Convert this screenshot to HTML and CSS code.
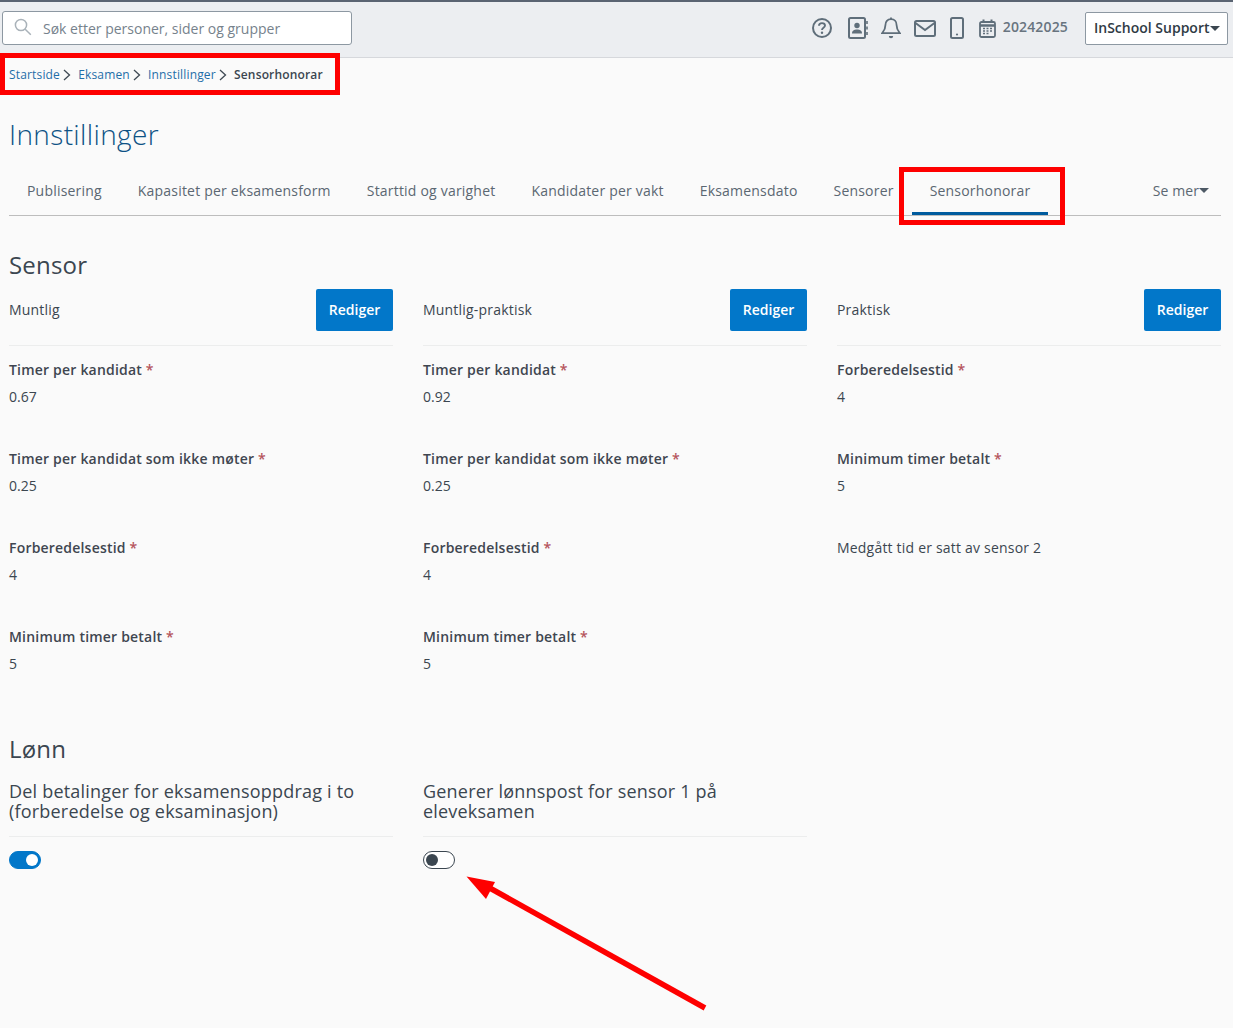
FILE: index.html
```html
<!DOCTYPE html>
<html lang="no">
<head>
<meta charset="utf-8">
<title>Sensorhonorar</title>
<link rel="stylesheet" href="styles.css">
</head>
<body>
<header class="topbar">
  <div class="search">
    <svg class="search-icon" width="18" height="18" viewBox="0 0 18 18" fill="none" stroke="#a9b2b9" stroke-width="1.5"><circle cx="7" cy="7" r="5.6"/><path d="M11.2 11.2l5.6 5.6"/></svg>
    <span class="search-text">Søk etter personer, sider og grupper</span>
  </div>
  <div class="tools">
    <svg class="ic ic-wide" width="22" height="22" viewBox="0 0 22 22" fill="none" stroke="#5f6e7a" stroke-width="2"><circle cx="11" cy="11" r="9"/><path d="M8 8.800c0-1.800 1.400-2.700 3-2.700s3 .9 3 2.500c0 2.200-3 2.200-3 4.300" stroke-width="1.900"/><circle cx="11" cy="15.700" r="1.200" fill="#5f6e7a" stroke="none"/></svg>
    <svg class="ic ic-tight" width="20" height="22" viewBox="0 0 20 22" fill="none" stroke="#5f6e7a" stroke-width="2"><rect x="1" y="1" width="16" height="20" rx="1.500"/><circle cx="9" cy="8.500" r="2.700" fill="#5f6e7a" stroke="none"/><path d="M4 16.500c0-3 2-4 5-4s5 1 5 4z" fill="#5f6e7a" stroke="none"/><path d="M19 4v3M19 9.500v3M19 15v3" stroke-width="1.600"/></svg>
    <svg class="ic ic-tight" width="20" height="22" viewBox="0 0 20 22" fill="none" stroke="#5f6e7a" stroke-width="1.800"><path d="M10 2.200c-3.600 0-5.600 2.600-5.600 6 0 4.300-1.400 5.500-3.400 8h18c-2-2.500-3.400-3.700-3.400-8 0-3.400-2-6-5.600-6z"/><path d="M10 .5v1.700"/><path d="M7.800 19a2.200 2.200 0 0 0 4.400 0z" fill="#5f6e7a" stroke="none"/></svg>
    <svg class="ic" width="22" height="17" viewBox="0 0 22 17" fill="none" stroke="#5f6e7a" stroke-width="2"><rect x="1" y="1" width="20" height="15" rx="1.500"/><path d="M1.500 3l9.500 7L20.500 3"/></svg>
    <svg class="ic ic-wide" width="14" height="22" viewBox="0 0 14 22" fill="none" stroke="#5f6e7a" stroke-width="2"><rect x="1" y="1" width="12" height="20" rx="1.500"/><circle cx="7" cy="17.500" r="1.100" fill="#5f6e7a" stroke="none"/></svg>
    <div class="term">
      <svg width="17" height="19" viewBox="0 0 17 19" fill="none" stroke="#5f6e7a" stroke-width="1.800"><rect x="1" y="3" width="15" height="15" rx="1.500"/><path d="M1 6.500h15" stroke-width="2.500"/><path d="M4.500 0.500v3.500M12.500 0.500v3.500" stroke-width="2"/><path d="M4 9.500h2M7.500 9.500h2M11 9.500h2M4 12h2M7.500 12h2M11 12h2M4 14.500h2M7.500 14.500h2" stroke-width="1.500"/></svg>
      <span>20242025</span>
    </div>
    <div class="user">InSchool Support<span class="caret"></span></div>
  </div>
</header>

<nav class="crumbs">
  <a>Startside</a>
  <svg class="chev" width="8" height="12" viewBox="0 0 8 12" fill="none" stroke="#3f4a54" stroke-width="1.300"><path d="M1 1l5.500 5L1 11"/></svg>
  <a>Eksamen</a>
  <svg class="chev" width="8" height="12" viewBox="0 0 8 12" fill="none" stroke="#3f4a54" stroke-width="1.300"><path d="M1 1l5.500 5L1 11"/></svg>
  <a>Innstillinger</a>
  <svg class="chev" width="8" height="12" viewBox="0 0 8 12" fill="none" stroke="#3f4a54" stroke-width="1.300"><path d="M1 1l5.500 5L1 11"/></svg>
  <strong>Sensorhonorar</strong>
</nav>

<main class="page">
  <h1>Innstillinger</h1>
  <div class="tabs">
    <span class="tab">Publisering</span>
    <span class="tab">Kapasitet per eksamensform</span>
    <span class="tab">Starttid og varighet</span>
    <span class="tab">Kandidater per vakt</span>
    <span class="tab">Eksamensdato</span>
    <span class="tab">Sensorer</span>
    <span class="tab active">Sensorhonorar</span>
    <span class="tab more">Se mer<span class="caret"></span></span>
  </div>

  <h2 class="sensor-title">Sensor</h2>
  <div class="cols">
    <section>
      <div class="col-head"><span>Muntlig</span><button class="btn">Rediger</button></div>
      <div class="field"><label>Timer per kandidat <i>*</i></label><p>0.67</p></div>
      <div class="field"><label>Timer per kandidat som ikke møter <i>*</i></label><p>0.25</p></div>
      <div class="field"><label>Forberedelsestid <i>*</i></label><p>4</p></div>
      <div class="field"><label>Minimum timer betalt <i>*</i></label><p>5</p></div>
    </section>
    <section>
      <div class="col-head"><span>Muntlig-praktisk</span><button class="btn">Rediger</button></div>
      <div class="field"><label>Timer per kandidat <i>*</i></label><p>0.92</p></div>
      <div class="field"><label>Timer per kandidat som ikke møter <i>*</i></label><p>0.25</p></div>
      <div class="field"><label>Forberedelsestid <i>*</i></label><p>4</p></div>
      <div class="field"><label>Minimum timer betalt <i>*</i></label><p>5</p></div>
    </section>
    <section>
      <div class="col-head"><span>Praktisk</span><button class="btn">Rediger</button></div>
      <div class="field"><label>Forberedelsestid <i>*</i></label><p>4</p></div>
      <div class="field"><label>Minimum timer betalt <i>*</i></label><p>5</p></div>
      <div class="field"><span class="note">Medgått tid er satt av sensor 2</span></div>
    </section>
  </div>

  <h2 class="pay-title">Lønn</h2>
  <div class="cols">
    <section>
      <h3>Del betalinger for eksamensoppdrag i to (forberedelse og eksaminasjon)</h3>
      <div class="switch on"></div>
    </section>
    <section>
      <h3>Generer lønnspost for sensor 1 på eleveksamen</h3>
      <div class="switch"></div>
    </section>
  </div>
</main>

<div class="mark mark-crumbs"></div>
<div class="mark mark-tab"></div>
<svg class="arrow" width="250" height="145" viewBox="0 0 250 145">
  <path d="M243 133L26 12" stroke="#fe0000" stroke-width="5.500" fill="none"/>
  <polygon points="4.500,1.500 33,7 24,24" fill="#fe0000"/>
</svg>
</body>
</html>
```
FILE: styles.css
```css
* { box-sizing: border-box; }
html, body { margin: 0; padding: 0; }
body {
  height: 1028px;
  overflow: hidden;
  background: #fafafa;
  color: #3b4650;
  font-family: "Open Sans", sans-serif;
  font-size: 14px;
  line-height: 20px;
  position: relative;
}
.topbar {
  height: 58px;
  background: #eceef1;
  border-top: 2px solid #5a6472;
  border-bottom: 1px solid #d6d8dc;
  display: flex;
  align-items: center;
  justify-content: space-between;
  padding: 0 5px 3px 2px;
}
.search {
  width: 350px;
  height: 34px;
  background: #fff;
  border: 1px solid #8d98a2;
  border-radius: 3px;
  display: flex;
  align-items: center;
  gap: 11px;
  padding-left: 11px;
  color: #76828c;
}
.search-icon { margin-top: -2px; }
.search-text { margin-top: 1px; }
.tools { display: flex; align-items: center; }
.ic { display: block; margin-right: 14px; }
.ic-tight { margin-right: 13px; }
.ic-wide { margin-right: 15px; }
.term {
  display: flex;
  align-items: center;
  gap: 7px;
  color: #68747f;
  font-weight: 600;
  letter-spacing: 0.15px;
  margin-right: 17px;
}
.term span { margin-top: -2px; }
.user {
  width: 143px;
  height: 33px;
  background: #fff;
  border: 1px solid #8d98a2;
  border-radius: 2px;
  display: flex;
  align-items: center;
  padding-left: 8px;
  font-weight: 600;
  color: #2f3a44;
  white-space: nowrap;
}
.caret {
  display: inline-block;
  width: 0;
  height: 0;
  border-left: 5px solid transparent;
  border-right: 5px solid transparent;
  border-top: 5px solid #3b4650;
}
.crumbs {
  height: 33px;
  padding-left: 9px;
  display: flex;
  align-items: center;
  font-size: 12px;
  letter-spacing: 0.16px;
}
.crumbs a { color: #1f6ea8; }
.crumbs strong { color: #3b4650; font-weight: 600; }
.chev { margin: 0 7.2px 0 3px; }
.page { padding: 0 12px 0 9px; letter-spacing: 0.2px; }
h1 {
  margin: 25px 0 0;
  font-size: 28px;
  line-height: 36px;
  font-weight: 300;
  letter-spacing: 0.37px;
  color: #0d5285;
}
.tabs {
  height: 49px;
  margin-top: 15px;
  border-bottom: 1px solid #bdbdbd;
  display: flex;
  gap: 36px;
  padding-left: 18px;
}
.tab {
  height: 48px;
  line-height: 48px;
  color: #5b6772;
  white-space: nowrap;
}
.tab.active {
  padding: 0 18px;
  margin: 0 -18px;
  border-bottom: 3px solid #005b9e;
}
.tab.more { margin-left: auto; margin-right: 12px; letter-spacing: 0.1px; }
.tab.more .caret { vertical-align: 3px; border-top-color: #4d5965; }
h2 {
  font-size: 24px;
  line-height: 32px;
  font-weight: 400;
  margin: 0;
  color: #3b4650;
}
.sensor-title { margin-top: 33px; }
.cols {
  display: grid;
  grid-template-columns: repeat(3, 384px);
  gap: 30px;
}
.col-head {
  height: 57px;
  margin-top: 8px;
  padding-bottom: 15px;
  border-bottom: 1px solid #eceded;
  display: flex;
  align-items: center;
  justify-content: space-between;
}
.btn {
  width: 77px;
  height: 42px;
  background: #0277c9;
  color: #fff;
  border: 0;
  border-radius: 2px;
  font: 600 14px "Open Sans", sans-serif;
  padding: 0;
}
.field { height: 89px; padding-top: 14px; }
.field label { display: block; font-weight: 600; color: #3f4650; }
.field label i { font-style: normal; color: #b5545c; }
.field p { margin: 7px 0 0; letter-spacing: 0; }
.note { display: block; }
.pay-title { margin-top: 31px; }
h3 {
  margin: 10px 0 0;
  box-sizing: content-box;
  height: 40px;
  padding: 6px 0 15px;
  font-size: 18px;
  line-height: 20px;
  font-weight: 400;
  border-bottom: 1px solid #eceded;
  color: #3b4650;
}
.switch {
  width: 32px;
  height: 18px;
  margin-top: 14px;
  border-radius: 9px;
  background: #fff;
  border: 1px solid #3b4650;
  position: relative;
}
.switch::after {
  content: "";
  position: absolute;
  top: 2px;
  left: 2px;
  width: 12px;
  height: 12px;
  border-radius: 50%;
  background: #3b4650;
}
.switch.on { background: #0277c9; border-color: #0277c9; }
.switch.on::after { left: auto; right: 2px; background: #fff; }
.mark {
  position: absolute;
  border: 5px solid #fe0000;
  pointer-events: none;
}
.mark-crumbs { left: 0; top: 53px; width: 340px; height: 42px; }
.mark-tab { left: 899px; top: 167px; width: 166px; height: 58px; }
.arrow { position: absolute; left: 462px; top: 875px; }
```
